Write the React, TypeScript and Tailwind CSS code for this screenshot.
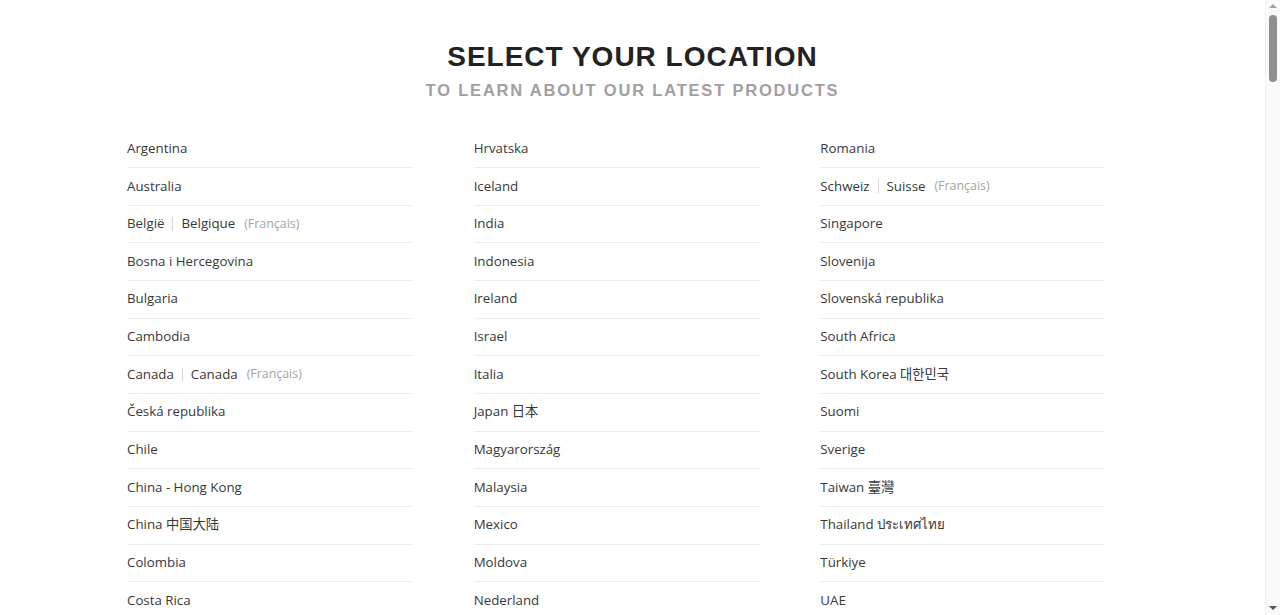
const COLUMNS: string[][] = [
  [
    'Argentina',
    'Australia',
    'België|Belgique',
    'Bosna i Hercegovina',
    'Bulgaria',
    'Cambodia',
    'Canada|Canada',
    'Česká republika',
    'Chile',
    'China - Hong Kong',
    'China 中国大陆',
    'Colombia',
    'Costa Rica',
  ],
  [
    'Hrvatska',
    'Iceland',
    'India',
    'Indonesia',
    'Ireland',
    'Israel',
    'Italia',
    'Japan 日本',
    'Magyarország',
    'Malaysia',
    'Mexico',
    'Moldova',
    'Nederland',
  ],
  [
    'Romania',
    'Schweiz|Suisse',
    'Singapore',
    'Slovenija',
    'Slovenská republika',
    'South Africa',
    'South Korea 대한민국',
    'Suomi',
    'Sverige',
    'Taiwan 臺灣',
    'Thailand ประเทศไทย',
    'Türkiye',
    'UAE',
  ],
];

const HEADING_FONT = '"Liberation Sans", Arial, sans-serif';

const Row = ({ label }: { label: string }) => {
  const parts = label.split('|');
  return (
    <div className="flex h-[37.67px] w-[285px] items-center border-b border-[#ececec] text-[13.3px] text-[#383838]">
      {parts.length === 1 ? (
        <span>{label}</span>
      ) : (
        <span className="flex items-center">
          <span>{parts[0]}</span>
          <span className="mx-[8px] h-[14px] w-px bg-[#d6d6d6]"></span>
          <span>{parts[1]}</span>
          <span className="ml-[9px] text-[12.4px] text-[#a3a3a3]">(Français)</span>
        </span>
      )}
    </div>
  );
};

// fake browser scrollbar, as in the screenshot
const ScrollTrack = () => (
  <div className="flex w-[15px] flex-col items-center border-l border-[#f0f0f0] bg-[#fafafa]">
    <div className="mt-[4px] h-0 w-0 border-x-[4px] border-b-[4px] border-x-transparent border-b-[#a3a3a3]"></div>
    <div className="mt-[7px] h-[67px] w-[8px] rounded-full bg-[#8f8f8f]"></div>
    <div className="flex-1"></div>
    <div className="mb-[5px] h-0 w-0 border-x-[4px] border-t-[4px] border-x-transparent border-t-[#505050]"></div>
  </div>
);

export default function App() {
  return (
    <div
      className="flex h-screen bg-white"
      style={{ fontFamily: '"Open Sans", "Noto Sans", "Noto Sans CJK KR", "Noto Sans CJK SC", sans-serif' }}
    >
      <main className="flex-1 overflow-hidden">
        <div className="flex flex-col items-center pt-[43px]">
          <h1
            className="text-[28px] font-bold leading-none tracking-[1px] text-[#222]"
            style={{ fontFamily: HEADING_FONT }}
          >
            SELECT YOUR LOCATION
          </h1>
          <p
            className="mt-[10.5px] text-[16.5px] font-bold leading-none tracking-[1.8px] text-[#a0a0a0]"
            style={{ fontFamily: HEADING_FONT }}
          >
            TO LEARN ABOUT OUR LATEST PRODUCTS
          </p>
        </div>
        <div className="ml-[127px] mt-[32.5px] grid w-[1040px] grid-cols-3">
          {COLUMNS.map((col, i) => (
            <div key={i} className="flex flex-col">
              {col.map((c) => (
                <Row key={c} label={c} />
              ))}
            </div>
          ))}
        </div>
      </main>
      <ScrollTrack />
    </div>
  );
}
